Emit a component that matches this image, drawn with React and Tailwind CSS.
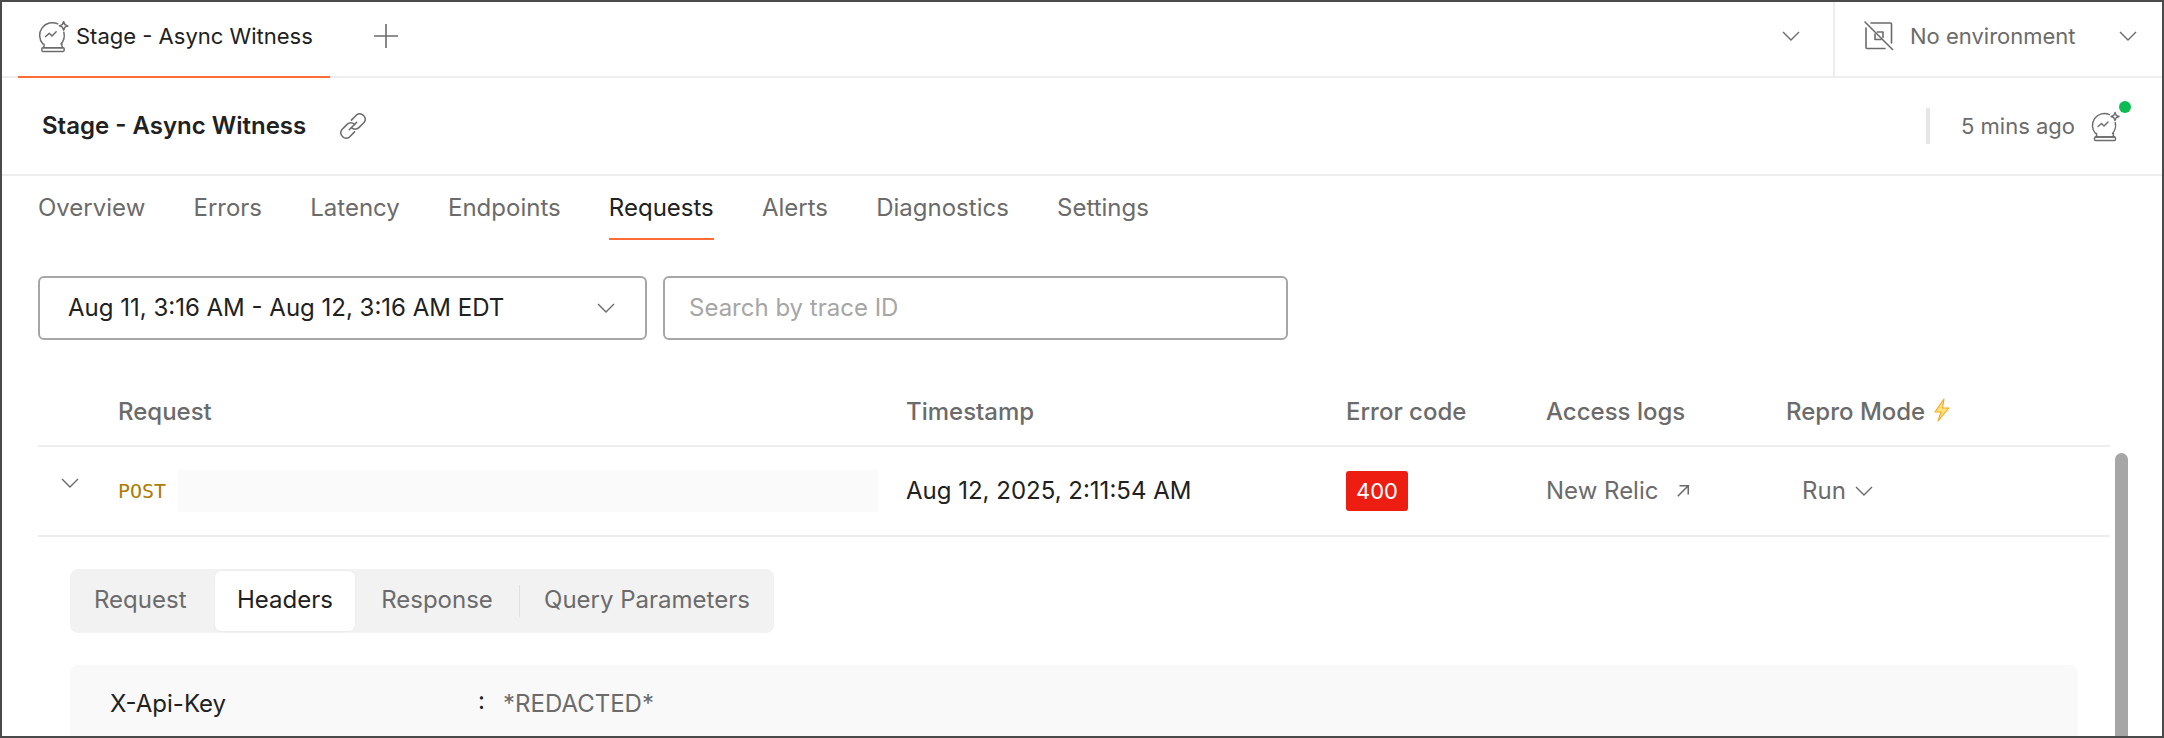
const Chevron = ({ className = '' }) => (
  <svg className={`w-[18px] h-[10px] shrink-0 ${className}`} viewBox="0 0 18 10" fill="none" stroke="#6b6b6b" strokeWidth="1.4">
    <path d="M1 1l8 8 8-8" />
  </svg>
);

const BallIcon = ({ className }) => (
  <svg className={className} viewBox="0 0 32 32" fill="none" stroke="#6b6b6b" strokeWidth="1.4" strokeLinecap="round" strokeLinejoin="round">
    <path d="M20.5 4.6A12 12 0 0 0 6.5 23.5" />
    <path d="M26.2 12.5A12 12 0 0 1 23.5 23.5" />
    <path d="M9 16.5l3.5-3 2.5 2.5 4-4" />
    <path d="M26 2.5l1.2 2.8L30 6.5l-2.8 1.2L26 10.5l-1.2-2.8L22 6.5l2.8-1.2z" />
    <path d="M7.5 23.5c.5 1.2.3 2.5-.8 3.5h18.6c-1.1-1-1.3-2.3-.8-3.5" />
    <rect x="5.5" y="27" width="21" height="3.5" rx="1" />
  </svg>
);

const NoEnvIcon = () => (
  <svg className="w-[30px] h-[30px]" viewBox="0 0 30 30" fill="none" stroke="#6b6b6b" strokeWidth="1.6" strokeLinecap="round" strokeLinejoin="round">
    <path d="M7 2h19.5a1 1 0 0 1 1 1v19" />
    <path d="M2 7v19.5a1 1 0 0 0 1 1h18" />
    <path d="M1 1l27.5 27.5" />
    <path d="M11 13v5.5h6" />
    <path d="M13.5 11H19v5.5" />
  </svg>
);

const LinkIcon = () => (
  <svg className="w-[30px] h-[30px]" viewBox="0 0 28 28" fill="none" stroke="#6b6b6b" strokeWidth="1.4" strokeLinecap="round" strokeLinejoin="round">
    <path d="M12.5 8.5l4.8-4.8a5 5 0 0 1 7 7l-4.8 4.8a5 5 0 0 1-7 0" />
    <path d="M15.5 19.5l-4.8 4.8a5 5 0 0 1-7-7l4.8-4.8a5 5 0 0 1 7 0" />
    <path d="M10.5 17.5l7-7" />
  </svg>
);

const Bolt = () => (
  <svg className="w-[18px] h-[24px] ml-[8px] -mt-1" viewBox="0 0 18 24" fill="#ffe27a" stroke="#f5a623" strokeWidth="1.1" strokeLinejoin="round">
    <path d="M11 1L2 14h6l-3 9 11-13h-6.5z" />
  </svg>
);

const NavTab = ({ label, active }) => (
  <div className={`h-full flex items-center border-b-2 pt-[2px] ${active ? 'border-[#ff6c37] text-[#212121]' : 'border-transparent text-[#6b6b6b]'}`}>
    {label}
  </div>
);

const SubTab = ({ label, active, className = '' }) => (
  <div className={`h-[60px] flex items-center rounded-md pb-[2px] ${active ? 'bg-white text-[#212121] shadow-[0_0_2px_rgba(0,0,0,0.08)]' : 'text-[#6b6b6b]'} ${className}`}>
    {label}
  </div>
);

const App = () => {
  const tabs = ['Overview', 'Errors', 'Latency', 'Endpoints', 'Requests', 'Alerts', 'Diagnostics', 'Settings'];

  return (
    <div className="relative h-[738px] overflow-hidden border-2 border-[#4a4a4a] bg-white text-[24px] text-[#212121]" style={{ fontFamily: 'Inter, sans-serif' }}>

      {/* Top tab strip */}
      <div className="h-[76px] flex border-b-2 border-[#ededed] text-[22px]">
        <div className="ml-4 w-[312px] -mb-[2px] flex items-center border-b-2 border-[#ff6c37] pl-[18px] pb-[6px]">
          <BallIcon className="w-[34px] h-[34px] mr-[6px]" />
          <span>Stage - Async Witness</span>
        </div>
        <div className="ml-[44px] flex items-center pb-[6px]">
          <svg className="w-6 h-6" viewBox="0 0 24 24" fill="none" stroke="#6b6b6b" strokeWidth="1.6">
            <path d="M12 0v24M0 12h24" />
          </svg>
        </div>
        <div className="flex-1 flex items-center justify-end pr-[33px] pb-[6px]">
          <Chevron />
        </div>
        <div className="w-[329px] border-l-2 border-[#ededed] flex items-center pl-[29px] pr-[25px] pb-[6px] text-[#6b6b6b]">
          <NoEnvIcon />
          <span className="ml-4">No environment</span>
          <Chevron className="ml-auto" />
        </div>
      </div>

      {/* Title row */}
      <div className="h-[98px] flex items-center border-b-2 border-[#ededed] pl-10 pr-[41px]">
        <h1 className="font-semibold">Stage - Async Witness</h1>
        <div className="ml-[32px]"><LinkIcon /></div>
        <div className="ml-auto flex items-center text-[#6b6b6b] text-[22px]">
          <div className="w-1 h-9 bg-[#e6e6e6] mr-[31px]" />
          <span>5 mins ago</span>
          <div className="relative ml-[14px]">
            <BallIcon className="w-[32px] h-[32px]" />
            <span className="absolute -top-[9px] -right-[10px] w-3 h-3 rounded-full bg-[#0cbb52]" />
          </div>
        </div>
      </div>

      {/* Nav tabs */}
      <div className="h-[64px] flex gap-[48.2px] pl-9">
        {tabs.map((t) => <NavTab key={t} label={t} active={t === 'Requests'} />)}
      </div>

      {/* Filters */}
      <div className="flex gap-4 pl-9 mt-9">
        <div className="w-[609px] h-16 flex items-center border-2 border-[#a6a6a6] rounded-md pl-[28px] pr-[30px]">
          <span>Aug 11, 3:16 AM - Aug 12, 3:16 AM EDT</span>
          <Chevron className="ml-auto" />
        </div>
        <div className="w-[625px] h-16 flex items-center border-2 border-[#a6a6a6] rounded-md pl-6 text-[#a6a6a6]">
          Search by trace ID
        </div>
      </div>

      {/* Table */}
      <div className="ml-9 mt-[30px] w-[2072px]">
        <div className="h-[77px] flex items-center font-medium text-[#6b6b6b] border-b-2 border-[#ededed] pt-2">
          <div className="w-[80px]" />
          <div className="w-[788px]">Request</div>
          <div className="w-[440px]">Timestamp</div>
          <div className="w-[200px]">Error code</div>
          <div className="w-[240px]">Access logs</div>
          <div className="flex items-center">Repro Mode<Bolt /></div>
        </div>
        <div className="h-[90px] flex items-center border-b-2 border-[#ededed]">
          <div className="w-[80px] pl-[23px] -mt-[16px]">
            <Chevron />
          </div>
          <div className="w-[788px] flex items-center">
            <span className="w-[60px] text-[#ad7a03] text-[20px]" style={{ fontFamily: '"DejaVu Sans Mono", monospace' }}>POST</span>
            <div className="w-[700px] h-[42px] bg-[#fafafa]" />
          </div>
          <div className="w-[440px]">Aug 12, 2025, 2:11:54 AM</div>
          <div className="w-[200px]">
            <span className="inline-flex items-center justify-center w-[62px] h-10 rounded-[3px] bg-[#ee1d12] text-white text-[22px]">400</span>
          </div>
          <div className="w-[240px] flex items-center text-[#6b6b6b]">
            New Relic
            <svg className="w-[14px] h-[14px] ml-[18px]" viewBox="0 0 16 16" fill="none" stroke="#6b6b6b" strokeWidth="1.8">
              <path d="M2 14L14 2M4 2h10v10" />
            </svg>
          </div>
          <div className="flex items-center pl-4 text-[#6b6b6b]">
            Run
            <Chevron className="ml-[9px]" />
          </div>
        </div>

        {/* Expanded row */}
        <div className="pl-8 pt-[32px] pr-[32px]">
          <div className="w-[704px] h-16 flex items-center bg-[#f2f2f2] rounded-lg pl-[2px] text-[#6b6b6b]">
            <SubTab label="Request" className="w-[143px] pl-[22px]" />
            <SubTab label="Headers" active className="w-[140px] justify-center" />
            <SubTab label="Response" className="w-[164px] justify-center" />
            <div className="w-px h-8 bg-[#e0e0e0]" />
            <SubTab label="Query Parameters" className="w-[254px] justify-center" />
          </div>
          <div className="mt-8 h-[120px] bg-[#f9f9f9] rounded-lg pt-[21px] pl-10 flex items-start">
            <span className="w-[368px]">X-Api-Key</span>
            <span className="w-[25px] -mt-[3px]">:</span>
            <span className="text-[#6b6b6b]">*REDACTED*</span>
          </div>
        </div>
      </div>

      {/* Scrollbar thumb */}
      <div className="absolute left-[2113px] top-[451px] w-[13px] h-[300px] rounded-full bg-[#a6a6a6]" />
    </div>
  );
};

export default App;
